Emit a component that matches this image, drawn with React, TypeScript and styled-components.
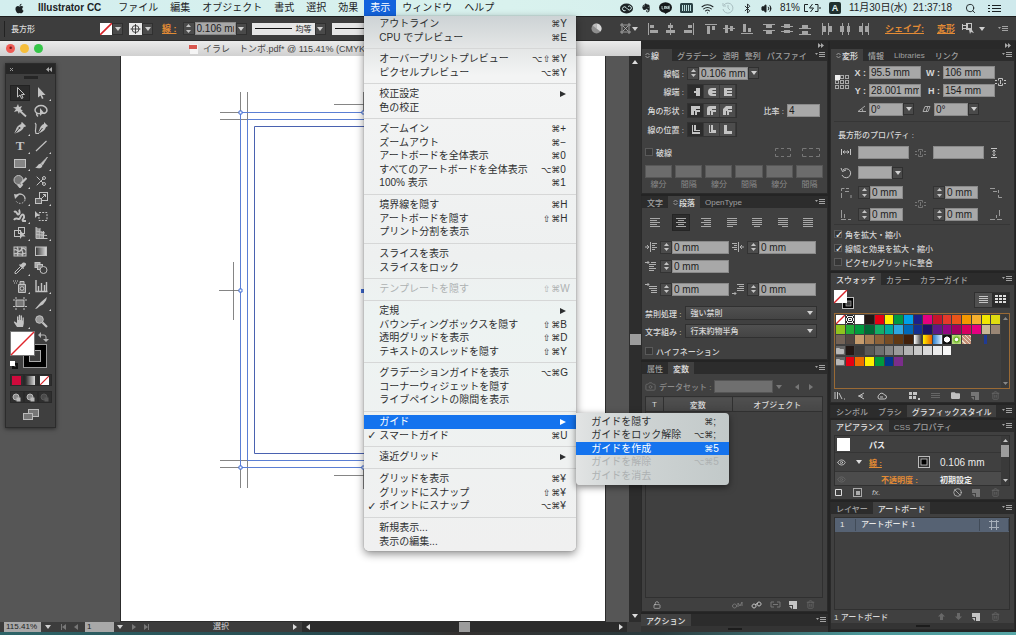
import React from 'react';
import styled, { createGlobalStyle, css } from 'styled-components';
import { Scissors, Wifi, Bluetooth, Volume2, Search, Trash2, Camera, Eye, LockOpen, Ban } from 'lucide-react';
import { FaApple, FaEvernote, FaLine, FaFolder } from 'react-icons/fa';

const ui = '"Liberation Sans", "Noto Sans CJK JP", "DejaVu Sans", sans-serif';

const GlobalStyle = createGlobalStyle`
  * { box-sizing: border-box; }
  body { margin: 0; background: #2a2a2a; font-family: ${ui}; font-size: 8px; color: #d6d6d6; }
  button, input, select { font: inherit; color: inherit; margin: 0; padding: 0; border: 0; border-radius: 0; background: none; }
  button { display: inline-flex; align-items: center; justify-content: center; }
  svg { display: block; flex: none; }
`;

/* ---------- shell ---------- */

const Page = styled.div`
  min-height: 100vh;
  display: flex;
  flex-direction: column;
  overflow: hidden;
`;

const Workspace = styled.main`
  flex: 1;
  display: flex;
`;

const Desktop = styled.div`
  height: 3px;
  background: linear-gradient(90deg, #2d6468, #27484d 35%, #33302f 45%, #2b3c3f 65%, #4b9799 85%, #57a6a6);
`;

/* ---------- menu bar ---------- */

const MenuBar = styled.nav`
  height: 16px;
  display: flex;
  align-items: center;
  padding: 0 15px 0 14px;
  background: linear-gradient(90deg, #d3eeee, #d9f2ee 50%, #cfe9ec);
  color: #1c2224;
  font-size: 10px;
  line-height: 16px;
  white-space: nowrap;
  position: relative;
  z-index: 5;
`;

const MenuTitle = styled.button<{ $open?: boolean; $bold?: boolean }>`
  height: 16px;
  padding: 0 6px;
  font-weight: ${p => (p.$bold ? 700 : 400)};
  ${p => p.$open && css`background: #1263dd; color: #fff;`}
`;

const MenuAnchor = styled.div`
  position: relative;
`;

const StatusItems = styled.div`
  margin-left: auto;
  display: flex;
  align-items: center;
  gap: 8px;
`;

const InputMode = styled.span`
  width: 12px;
  height: 12px;
  border-radius: 2px;
  background: #20302f;
  color: #e4f5f3;
  font-size: 9px;
  line-height: 12px;
  text-align: center;
  font-weight: 700;
`;

const Clock = styled.span`
  display: flex;
  gap: 6px;
  margin-right: 5px;
`;

const DropMenu = styled.ul`
  position: absolute;
  top: 16px;
  left: 0;
  width: 212px;
  margin: 0;
  padding: 1px 0 3px;
  list-style: none;
  background: linear-gradient(180deg, #cdd3d5, #e4e6e6 32px, #f3f4f4 60px, #eef0f0 240px, #edf3f2 300px, #f0f0f0);
  border-radius: 0 0 5px 5px;
  box-shadow: 0 3px 8px rgba(0, 0, 0, 0.45), 0 0 1px rgba(0, 0, 0, 0.5);
  color: #2d2f30;
`;

const MenuGroup = styled.ul`
  margin: 0;
  padding: 0;
  list-style: none;
  & > li:nth-child(odd) { height: 14px; }
  & > li:nth-child(even) { height: 13px; }
`;

const MenuRule = styled.li`
  height: 8px;
  display: flex;
  align-items: center;
  &::before { content: ''; flex: 1; height: 1px; background: #d6d7d7; }
`;

const MenuRow = styled.li<{ $tone?: 'active' | 'dim' }>`
  position: relative;
  display: flex;
  align-items: center;
  padding-right: 9px;
  line-height: 14px;
  ${p => p.$tone === 'active' && css`background: #1473ee; color: #fff;`}
  ${p => p.$tone === 'dim' && css`color: #adb1b2;`}
`;

const Check = styled.span`
  width: 15px;
  padding-left: 3px;
  font: 700 11px/13px "DejaVu Sans", sans-serif;
`;

const Keys = styled.span`
  margin-left: auto;
  display: flex;
  align-items: center;
  font-family: "DejaVu Sans", sans-serif;
  font-size: 9px;
`;

const KeyMod = styled.span<{ $wide?: boolean }>`
  display: grid;
  place-items: center;
  width: ${p => (p.$wide ? 11 : 9)}px;
`;

const KeyName = styled.span`
  width: 7px;
  font-family: ${ui};
  font-size: 10px;
`;

const SubMenu = styled.ul`
  position: absolute;
  left: 100%;
  top: -2px;
  width: 153px;
  height: 72px;
  margin: 0;
  padding: 2px 0;
  list-style: none;
  border-radius: 0 4px 4px 4px;
  background: linear-gradient(90deg, #e2e4e4, #d0d5d5 30%, #c2c9c9);
  box-shadow: 0 2px 7px rgba(0, 0, 0, 0.5);
  color: #2d2f30;
  & > li:nth-child(odd) { height: 13px; }
  & > li:nth-child(even) { height: 14px; }
`;

type Entry = { t: string; mods?: string; k?: string; sub?: boolean; on?: boolean; dim?: boolean; active?: boolean; items?: Entry[] };

const viewMenu: Entry[][] = [
  [{ t: 'アウトライン', mods: '⌘', k: 'Y' }, { t: 'CPU でプレビュー', mods: '⌘', k: 'E' }],
  [{ t: 'オーバープリントプレビュー', mods: '⌥⇧⌘', k: 'Y' }, { t: 'ピクセルプレビュー', mods: '⌥⌘', k: 'Y' }],
  [{ t: '校正設定', sub: true }, { t: '色の校正' }],
  [
    { t: 'ズームイン', mods: '⌘', k: '+' },
    { t: 'ズームアウト', mods: '⌘', k: '−' },
    { t: 'アートボードを全体表示', mods: '⌘', k: '0' },
    { t: 'すべてのアートボードを全体表示', mods: '⌥⌘', k: '0' },
    { t: '100% 表示', mods: '⌘', k: '1' },
  ],
  [{ t: '境界線を隠す', mods: '⌘', k: 'H' }, { t: 'アートボードを隠す', mods: '⇧⌘', k: 'H' }, { t: 'プリント分割を表示' }],
  [{ t: 'スライスを表示' }, { t: 'スライスをロック' }],
  [{ t: 'テンプレートを隠す', mods: '⇧⌘', k: 'W', dim: true }],
  [
    { t: '定規', sub: true },
    { t: 'バウンディングボックスを隠す', mods: '⇧⌘', k: 'B' },
    { t: '透明グリッドを表示', mods: '⇧⌘', k: 'D' },
    { t: 'テキストのスレッドを隠す', mods: '⇧⌘', k: 'Y' },
  ],
  [{ t: 'グラデーションガイドを表示', mods: '⌥⌘', k: 'G' }, { t: 'コーナーウィジェットを隠す' }, { t: 'ライブペイントの隙間を表示' }],
  [
    {
      t: 'ガイド', sub: true, active: true,
      items: [
        { t: 'ガイドを隠す', mods: '⌘', k: ';' },
        { t: 'ガイドをロック解除', mods: '⌥⌘', k: ';' },
        { t: 'ガイドを作成', mods: '⌘', k: '5', active: true },
        { t: 'ガイドを解除', mods: '⌥⌘', k: '5', dim: true },
        { t: 'ガイドを消去', dim: true },
      ],
    },
    { t: 'スマートガイド', mods: '⌘', k: 'U', on: true },
  ],
  [{ t: '遠近グリッド', sub: true }],
  [{ t: 'グリッドを表示', mods: '⌘', k: '¥' }, { t: 'グリッドにスナップ', mods: '⇧⌘', k: '¥' }, { t: 'ポイントにスナップ', mods: '⌥⌘', k: '¥', on: true }],
  [{ t: '新規表示...' }, { t: '表示の編集...' }],
];

const MenuLine = ({ e }: { e: Entry }) => (
  <MenuRow $tone={e.active ? 'active' : e.dim ? 'dim' : undefined}>
    <Check>{e.on ? '✓' : ''}</Check>
    {e.t}
    <Keys>
      {[...(e.mods ?? '')].map(m => <KeyMod key={m} $wide={m === '⌥'}>{m}</KeyMod>)}
      {e.k && <KeyName>{e.k}</KeyName>}
      {e.sub && <svg width="7" height="8" viewBox="0 0 7 8"><path d="M0 1l6 3-6 3z" fill="currentColor" /></svg>}
    </Keys>
    {e.items && <SubMenu>{e.items.map(s => <MenuLine key={s.t} e={s} />)}</SubMenu>}
  </MenuRow>
);

/* ---------- shared controls ---------- */

const Ico = ({ w = 12, h = w, d, line, o = 1, c = '#c4c4c4' }: { w?: number; h?: number; d: string; line?: boolean; o?: number; c?: string }) => (
  <svg width={w} height={h} viewBox={`0 0 ${w} ${h}`} opacity={o} aria-hidden="true">
    <path d={d} fill={line ? 'none' : c} stroke={line ? c : 'none'} />
  </svg>
);

const Caret = ({ c = '#d0d0d0' }: { c?: string }) => <Ico w={6} h={4} d="M0 0h6L3 4z" c={c} />;

const CaretButton = styled.button`
  width: 11px;
  height: 12px;
  background: #4a4a4a;
  border: 1px solid #303030;
`;

const SpinBox = styled.span`
  width: 12px;
  height: 13px;
  display: flex;
  flex-direction: column;
  background: #4b4b4b;
  border: 1px solid #333;
  & > button { flex: 1; }
`;

const Spinner = ({ label }: { label: string }) => (
  <SpinBox>
    <button aria-label={`${label} +`}><Ico w={5} h={3} d="M0 3h5L2.5 0z" /></button>
    <button aria-label={`${label} -`}><Ico w={5} h={3} d="M0 0h5L2.5 3z" /></button>
  </SpinBox>
);

const Field = styled.input<{ $w?: number; $off?: boolean }>`
  width: ${p => (p.$w ? `${p.$w}px` : 'auto')};
  ${p => !p.$w && 'flex: 1; min-width: 0;'}
  height: 13px;
  padding: 0 1px;
  background: ${p => (p.$off ? '#6f6f6f' : '#a8a8a8')};
  border: 1px solid ${p => (p.$off ? '#555' : '#8a8a8a')};
  color: #1d1d1d;
  font-size: 10px;
  line-height: 11px;
`;

const Row = styled.div<{ $h: number; $gap?: number }>`
  height: ${p => p.$h}px;
  display: flex;
  align-items: center;
  gap: ${p => p.$gap ?? 3}px;
`;

const Push = styled.span`
  flex: 1;
`;

const Label = styled.label<{ $w?: number; $dim?: boolean }>`
  ${p => p.$w && `width: ${p.$w}px;`}
  text-align: right;
  white-space: nowrap;
  font-weight: 500;
  color: ${p => (p.$dim ? '#8b8b8b' : '#d8d8d8')};
`;

const Tick = styled.label`
  display: flex;
  align-items: center;
  gap: 3px;
  font-weight: 500;
  & > input {
    appearance: none;
    width: 8px;
    height: 8px;
    background: #363636;
    border: 1px solid #5a5a5a;
    display: grid;
    place-items: center;
  }
  & > input:checked::after {
    content: '✓';
    font: 700 10px/8px "DejaVu Sans", sans-serif;
    color: #f0f0f0;
  }
`;

/* ---------- control bar ---------- */

const ControlBar = styled.header`
  height: 25px;
  display: flex;
  align-items: center;
  padding: 0 8px 0 4px;
  background: #3d3d3d;
  border-top: 1px solid #1e1e1e;
  border-bottom: 1px solid #2b2b2b;
  white-space: nowrap;
`;

const BarSet = styled.div<{ $ml?: number; $gap?: number }>`
  display: flex;
  align-items: center;
  gap: ${p => p.$gap ?? 0}px;
  margin-left: ${p => p.$ml ?? 0}px;
`;

const BarLink = styled.a<{ $ml?: number }>`
  margin-left: ${p => p.$ml ?? 0}px;
  color: #e28b35;
  font-size: 9px;
  font-weight: 700;
  text-decoration: underline;
`;

const Grip = styled.span`
  width: 1px;
  height: 16px;
  background: #222;
`;

const Profile = styled.span`
  width: 63px;
  height: 12px;
  display: flex;
  align-items: center;
  gap: 4px;
  padding: 0 3px;
  background: #e6e6e6;
  color: #222;
  &::before { content: ''; flex: 1; height: 1px; background: #111; }
`;

const NoneSwatch = ({ s = 12 }: { s?: number }) => (
  <svg width={s} height={s} viewBox="0 0 12 12" aria-hidden="true">
    <rect width="12" height="12" fill="#fff" />
    <path d="M0 12L12 0" stroke="#d8242a" strokeWidth="1.6" />
  </svg>
);

const alignSets = [
  ['M1 0h1v12H1zM3 2h4v3H3zM3 7h8v3H3z', 'M5 0h1v12H5zM3 2h5v3H3zM1 7h9v3H1z', 'M10 0h1v12h-1zM5 2h4v3H5zM1 7h8v3H1z'],
  ['M0 1h12v1H0zM2 3h3v8H2zM7 3h3v4H7z', 'M0 5h12v1H0zM2 2h3v8H2zM7 3h3v5H7z', 'M0 10h12v1H0zM2 1h3v8H2zM7 5h3v4H7z'],
  ['M0 1h12v1H0zM3 2h6v3H3zM0 7h12v1H0zM3 8h6v3H3z', 'M0 3h12v1H0zM3 1h6v4H3zM0 8h12v1H0zM3 7h6v3H3z', 'M0 5h12v1H0zM3 2h6v3H3zM0 11h12v1H0zM3 8h6v3H3z'],
  ['M1 0h1v12H1zM2 3h3v6H2zM7 0h1v12H7zM8 3h3v6H8z', 'M3 0h1v12H3zM1 3h4v6H1zM9 0h1v12H9zM8 3h3v6H8z', 'M5 0h1v12H5zM2 3h3v6H2zM11 0h1v12h-1zM8 3h3v6H8z'],
];

const TopBar = () => (
  <ControlBar>
    <Grip />
    <BarSet $ml={6}><Label>長方形</Label></BarSet>
    <BarSet $ml={65}><NoneSwatch /><CaretButton aria-label="塗り"><Caret /></CaretButton></BarSet>
    <BarSet $ml={6}>
      <svg width="13" height="12" viewBox="0 0 13 12"><rect width="13" height="12" fill="#e8e8e8" /><g fill="none" stroke="#222"><circle cx="6.5" cy="6" r="3.5" strokeWidth=".8" /><path d="M6.500 1v10M1.500 6h10" strokeWidth=".8" /></g></svg>
      <CaretButton aria-label="線の色"><Caret /></CaretButton>
    </BarSet>
    <BarSet $ml={9} $gap={6}>
      <BarLink href="#stroke">線 :</BarLink>
      <BarSet><Spinner label="線幅" /><Field $w={41} aria-label="線幅" defaultValue="0.106 mm" /><CaretButton aria-label="線幅の候補"><Caret /></CaretButton></BarSet>
    </BarSet>
    <BarSet $ml={5}><Profile>均等</Profile><CaretButton aria-label="可変線幅"><Caret /></CaretButton></BarSet>
    <BarSet $ml={6}><Profile /><CaretButton aria-label="ブラシ定義"><Caret /></CaretButton></BarSet>
    <Push />
    <svg width="11" height="11" viewBox="0 0 11 11"><circle cx="5.500" cy="5.500" r="5" fill="#8e8e8e" /><path d="M5.500.5a5 5 0 0 1 4 8L5.500 5.500z" fill="#d8d8d8" /><path d="M1.500 2.500a5 5 0 0 1 4-2v5z" fill="#bbb" /></svg>
    <BarSet $ml={18} $gap={1}>
      <svg width="11" height="11" viewBox="0 0 11 11"><path d="M2 0v11M9 0v11M0 2h11M0 9h11M3 3l5 5M8 3l-5 5" stroke="#b5b5b5" strokeWidth=".8" /></svg>
      <Caret />
    </BarSet>
    {alignSets.map((set, i) => (
      <BarSet key={i} $ml={i ? 10 : 9} $gap={6}>
        {set.map(d => <button key={d} aria-label="整列"><Ico d={d} c="#a4a4a4" /></button>)}
      </BarSet>
    ))}
    <BarLink $ml={16} href="#shape">シェイプ:</BarLink>
    <BarLink $ml={13} href="#transform">変形</BarLink>
    <BarSet $ml={7} $gap={5}>
      <Ico w={12} h={11} d="M0 1h1v6H0zM1 2h3v1H1zM1 5h3v1H1zM4 0h6v7l2 3-3-1-1 2-1-4H4zM6 1v4h3V1z" />
      <Caret />
    </BarSet>
    <BarSet $ml={13}><PanelMenu /></BarSet>
  </ControlBar>
);

function PanelMenu() {
  return <button aria-label="パネルメニュー"><Ico w={10} h={8} d="M0 2h3L1.500 4zM4 1h6v1H4zM4 3h6v1H4zM4 5h6v1H4z" c="#a2a2a2" /></button>;
}

/* ---------- document window ---------- */

const DocWindow = styled.section`
  flex: 1;
  min-width: 0;
  display: flex;
  flex-direction: column;
`;

const TitleBar = styled.div`
  height: 15px;
  display: flex;
  align-items: center;
  padding-left: 6px;
  background: linear-gradient(180deg, #ebebeb, #d0d0d0);
  color: #444;
`;

const Light = styled.button<{ $c: string }>`
  width: 9px;
  height: 9px;
  margin-right: 5px;
  border-radius: 50%;
  background: ${p => p.$c};
  font-size: 9px;
  line-height: 9px;
  color: #7a1511;
`;

const DocName = styled.h1`
  margin: 0 0 0 141px;
  display: flex;
  align-items: center;
  gap: 5px;
  font-size: 9px;
  font-weight: 400;
  white-space: pre;
`;

const Stage = styled.div`
  flex: 1;
  display: flex;
  background: #565656;
`;

const Canvas = styled.div`
  flex: 1;
  position: relative;
  overflow: hidden;
`;

const Artboard = styled.div`
  position: absolute;
  top: 0;
  bottom: 0;
  left: 120px;
  width: 486px;
  background: #fff;
  border: solid #2c2c2c;
  border-width: 0 1px 1px;
`;

const VScroll = styled.div`
  width: 12px;
  display: flex;
  flex-direction: column;
  align-items: center;
  justify-content: space-between;
  padding: 4px 0;
  background: #2d2d2d;
`;

const Thumb = styled.span<{ $w: number; $h: number }>`
  width: ${p => p.$w}px;
  height: ${p => p.$h}px;
  background: #9c9c9c;
`;

const StatusBar = styled.footer`
  height: 10px;
  display: flex;
  align-items: center;
  background: #3c3c3c;
  line-height: 10px;
`;

const StatusField = styled.input<{ $w: number }>`
  width: ${p => p.$w}px;
  height: 10px;
  padding: 0 2px;
  background: #a8a8a8;
  color: #1d1d1d;
`;

const StatusText = styled.span`
  width: 144px;
  text-align: center;
`;

const HTrack = styled.span`
  flex: 1;
  height: 10px;
  display: flex;
  align-items: center;
  justify-content: space-between;
  padding: 0 4px;
  background: #2b2b2b;
`;

const Artwork = () => (
  <svg width="245" height="440" viewBox="121 56 245 440" aria-label="トンボ">
    <g fill="none" stroke="#666" strokeWidth=".8">
      <path d="M240.500 92v21M247.500 92v28M220 112.500h20M220 119.500h28M240.500 488v-20M247.500 488v-28M220 467.500h20M220 460.500h28M233.500 262v58M219 290.500h22M334 104.500h31M334 475.500h31M363.500 92v20M363.500 468v21" />
    </g>
    <g fill="none" stroke="#5b7fd4">
      <path d="M366 112.500H240.500v355H366M366 119.500H247.500v341H366" />
      <path d="M366 126.500H254.500v327H366" stroke="#4a62b0" />
    </g>
    <g fill="#fff" stroke="#4a74d8">
      <path d="M239 111h3v3h-3zM239 289h3v3h-3zM239 466h3v3h-3zM362 111h3v3h-3zM362 466h3v3h-3z" />
    </g>
    <path d="M361 289h4v4h-4z" fill="#3c68d0" />
  </svg>
);

/* ---------- tool palette ---------- */

const Palette = styled.aside`
  position: absolute;
  left: 5px;
  top: 7px;
  width: 51px;
  background: #3f3f3f;
  border: 1px solid #2c2c2c;
  box-shadow: 0 1px 4px rgba(0, 0, 0, 0.5);
  padding-bottom: 6px;
`;

const PaletteHead = styled.div`
  height: 10px;
  display: flex;
  align-items: center;
  justify-content: space-between;
  padding: 0 3px;
  background: #272727;
`;

const PaletteGrip = styled.div`
  width: 14px;
  height: 3px;
  margin: 2px auto 6px;
  background: #262626;
`;

const Tools = styled.div`
  height: 245px;
  display: grid;
  grid-template-columns: 21px 21px;
  grid-template-rows: repeat(14, 1fr);
  padding-left: 4px;
`;

const Tool = styled.button<{ $on?: boolean; $more?: boolean }>`
  position: relative;
  height: 16px;
  width: 20px;
  color: #c2c2c2;
  ${p => p.$on && css`background: #2b2b2b; box-shadow: inset 0 0 0 1px #222;`}
  ${p => p.$more && css`
    &::after { content: ''; position: absolute; right: 0; bottom: 0; border: 1px solid #cfcfcf; border-left-color: transparent; border-top-color: transparent; }
  `}
`;

const Serif = styled.span`
  font: 700 13px/14px "Liberation Serif", serif;
`;

const art = (node: React.ReactNode) => (
  <svg width="14" height="14" viewBox="0 0 14 14" fill="none" stroke="#c2c2c2" strokeWidth="1" aria-hidden="true">{node}</svg>
);
const F = '#c2c2c2';

const toolset: { name: string; icon: React.ReactNode; more?: boolean; on?: boolean }[] = [
  { name: '選択', on: true, icon: art(<path d="M4.500 1.500v9.500l2.500-2 1.500 3.500 1.500-.7-1.500-3.300h3z" />) },
  { name: 'ダイレクト選択', more: true, icon: art(<path d="M4 1v10.500l2.500-2 1.500 3.500 1.500-.7L8 9h3.500z" fill={F} stroke="none" />) },
  { name: '自動選択', icon: art(<><path d="M6 6l7 6.500" strokeWidth="1.800" /><path d="M5 0l1 3 3-1-1.500 3L10 7 7 7l-1 3-1.500-3L1 8l2-3L0 3.500l3.500-.5z" fill={F} stroke="none" /></>) },
  { name: 'なげなわ', icon: art(<><path d="M6 9.500C3 10 1 8 1 6c0-2.500 3-4.500 6-4.500S13 3.500 13 6c0 2-1.500 3-3 3.500M3 9c-1 1 0 2.500 1 3.500" strokeWidth="1.400" /><path d="M6 4v8l2-2h3z" fill={F} stroke="none" /></>) },
  { name: 'ペン', more: true, icon: art(<><path d="M9 1l4 4-1 1-1-.3C10 9 7 11 2 12.500L1.500 12 3.500 7C4.500 5 6.500 3.500 8.500 3L8 2z" fill={F} stroke="none" /><path d="M2 12.500l4-5" stroke="#3f3f3f" /><circle cx="6.500" cy="7" r="1" fill="#3f3f3f" stroke="none" /></>) },
  { name: '曲線', icon: art(<><path d="M10 1l4 4-2 1c-1 3-3 5-8 6.500L6 7c1-2 2-3.500 4-4z" fill={F} stroke="none" /><path d="M4.500 12l4-5" stroke="#3f3f3f" /><path d="M1 2c3 2-1 5 1 10.500h3" strokeWidth="1.200" /></>) },
  { name: '文字', more: true, icon: <Serif>T</Serif> },
  { name: '直線', more: true, icon: art(<path d="M2 12L12.500 2" strokeWidth="1.200" />) },
  { name: '長方形', more: true, icon: art(<rect x="1.500" y="3.500" width="11" height="8" fill="#858585" />) },
  { name: 'ブラシ', more: true, icon: art(<><path d="M13.500 1L7 7.500l1.500 1.500z" fill={F} strokeWidth=".8" /><path d="M7 8c-3-1-3 3-6 3.500 3 1.500 7 1 7.500-2z" fill={F} stroke="none" /></>) },
  { name: '塗りブラシ', more: true, icon: art(<><circle cx="5.500" cy="6" r="4.500" fill="#777" /><path d="M13.500 4L8 9.500M5 10.500l2 2.500 2.500-3" strokeWidth="2.200" /></>) },
  { name: 'はさみ', more: true, icon: <Scissors size={12} style={{ rotate: '180deg' }} /> },
  { name: '回転', more: true, icon: art(<><path d="M3.500 4.500a5 5 0 0 1 8.500 4" strokeWidth="1.300" /><path d="M12 9a5 5 0 0 1-9 1" strokeDasharray="1.500 1.500" /><path d="M1 3l1 5 4-4z" fill={F} stroke="none" /></>) },
  { name: '拡大・縮小', more: true, icon: art(<><rect x="5.500" y="1.500" width="8" height="8" /><rect x="1.500" y="7.500" width="6" height="5" fill="#666" /><path d="M8 7l3.500-3.500M9 3.500h2.500V6" /></>) },
  { name: '線幅', more: true, icon: art(<path d="M1 3c3-2 3 4 5 2s-1-3 1-4M1 11c2-4 5 1 6-2s3-5 4-2-3 3-1 5h3" strokeWidth="2" />) },
  { name: '自由変形', icon: art(<><path d="M1 2v7l2-2h3z" fill={F} stroke="none" /><rect x="5" y="3.500" width="8" height="8" strokeDasharray="2 1.200" /></>) },
  { name: 'シェイプ形成', more: true, icon: art(<><rect x="1.500" y="4.500" width="6" height="6" /><rect x="5.500" y="1.500" width="6" height="6" /><path d="M7 4v9l2-2.500h3.500z" fill={F} stroke="none" /></>) },
  { name: '遠近グリッド', more: true, icon: art(<><path d="M2 1l4 2v9H2zM7 5l3 1v6H7z" fill="#999" stroke="none" /><path d="M2 1v11.500h11.500M2 5l9 2M2 8.500l11 1M6 2v10M9.500 5v7" /></>) },
  { name: 'メッシュ', icon: art(<><rect x="1" y="3" width="12" height="9" fill="#555" /><path d="M1 6c3-2 4 4 7 0s4 0 5 0M1 10c3-2 6 2 12-1M4 3c3 4-1 6 1 9M9 3c-2 4 3 5 0 9" strokeWidth="1.300" /></>) },
  { name: 'グラデーション', icon: <svg width="14" height="14" viewBox="0 0 14 14"><defs><linearGradient id="gr"><stop stopColor="#333" /><stop offset="1" stopColor="#ddd" /></linearGradient></defs><rect x="1.500" y="3" width="11" height="8.500" fill="url(#gr)" stroke="#c2c2c2" /></svg> },
  { name: 'スポイト', more: true, icon: art(<><path d="M9 2.500c1-2 5-1 4 1.500L10.500 6.500l.5 1-1 .5-4-4 .8-.8 1 .4z" fill={F} stroke="none" /><path d="M7.500 5.500L2 11v1.500h1.500L9 7" /></>) },
  { name: 'ブレンド', icon: art(<><rect x="1" y="1.500" width="5" height="5" fill="#aaa" /><rect x="3.500" y="3.500" width="5" height="5" fill="#888" /><circle cx="9.500" cy="9" r="3.500" fill="#3f3f3f" /></>) },
  { name: 'シンボルスプレー', more: true, icon: art(<><path d="M5.500 5.500h7v8h-7zM7 5V2.500h4V5" fill="#777" /><circle cx="9" cy="9.500" r="1.800" fill="#444" /><path d="M0 2h5M1 4h3" strokeDasharray="1 1" /></>) },
  { name: '棒グラフ', more: true, icon: art(<path d="M2 1v11.500h11.500M4.500 12V7M7.500 12V4M10.500 12V6M12.500 12V3" strokeWidth="1.400" />) },
  { name: 'アートボード', icon: art(<><rect x="3" y="4" width="8" height="6.500" fill="#777" /><path d="M3 1v2M11 1v2M3 12v2M11 12v2M0 4h2M12 4h2M0 10.500h2M12 10.500h2" /></>) },
  { name: 'スライス', more: true, icon: art(<path d="M13 1L7 6 1 13l2-.5 3-2.500 1-.5 2-1 3-4z" fill={F} stroke="none" />) },
  { name: '手のひら', more: true, icon: art(<path d="M4 13L1 8.500c-.5-1 .7-1.500 1.500-.5L4 9V3c0-1 1.300-1 1.300 0v3h.5V1.500c0-1 1.400-1 1.400 0V6h.5V2c0-1 1.300-1 1.300 0v4.500h.5V4c0-1 1.300-1 1.300 0v5.500L10 13z" fill={F} stroke="none" />) },
  { name: 'ズーム', icon: art(<><circle cx="5.500" cy="5.500" r="3.800" fill="#999" /><path d="M8.500 8.500L13 13" strokeWidth="2.200" /></>) },
];

const PaletteStack = styled.div`
  display: flex;
  flex-direction: column;
  align-items: center;
  padding-top: 1px;
  & > svg:first-child { margin-bottom: 2px; }
`;

const Chips = styled.div`
  display: flex;
  height: 12px;
  margin-bottom: 5px;
  background: #2f2f2f;
  & > button { width: 14px; height: 12px; border: 1px solid #292929; }
`;

const FillStroke = () => (
  <svg width="41" height="41" viewBox="0 0 41 41" aria-label="塗りと線">
    <path d="M30 4h4a2 2 0 0 1 2 2v3" stroke="#b5b5b5" fill="none" />
    <path d="M31 1v6l-3-3zM33 8h6l-3 3z" fill="#b5b5b5" />
    <rect x="13" y="13" width="24" height="24" fill="#999" />
    <rect x="14" y="14" width="22" height="22" fill="#000" />
    <rect x="19" y="19" width="12" height="12" fill="#aaa" />
    <rect x="20" y="20" width="10" height="10" fill="#3f3f3f" />
    <rect x="0" y="0" width="25" height="25" fill="#777" />
    <rect x="1" y="1" width="23" height="23" fill="#fff" />
    <path d="M1 24L24 1" stroke="#e0262c" strokeWidth="1.500" />
    <rect x="3" y="33" width="4" height="4" fill="none" stroke="#111" strokeWidth="2" />
    <rect x="0" y="30" width="5" height="5" fill="#fff" />
  </svg>
);

/* ---------- dock ---------- */

const Dock = styled.aside`
  display: grid;
  grid-template-columns: 187px 185px;
  gap: 2px;
  padding-right: 1px;
  background: #242424;
`;

const Column = styled.div`
  display: flex;
  flex-direction: column;
`;

const DockHead = styled.div`
  height: 8px;
  display: flex;
  justify-content: flex-end;
  align-items: center;
  padding-right: 4px;
  background: #292929;
`;

const Panel = styled.section<{ $grow?: boolean }>`
  display: flex;
  flex-direction: column;
  margin-bottom: 2px;
  background: #404040;
  border: 1px solid #2a2a2a;
  border-top: 0;
  ${p => p.$grow && 'flex: 1;'}
`;

const Tabs = styled.div`
  height: 12px;
  display: flex;
  background: #2c2c2c;
  padding-right: 2px;
`;

const TabButton = styled.button<{ $on?: boolean; $tight?: boolean }>`
  height: 12px;
  padding: 0 ${p => (p.$tight ? 3 : 5)}px;
  ${p => p.$tight && p.$on && 'padding-right: 13px; margin-right: 2px;'}
  gap: 1px;
  white-space: nowrap;
  font-weight: 500;
  color: ${p => (p.$on ? '#e2e2e2' : '#a0a0a0')};
  background: ${p => (p.$on ? '#404040' : 'transparent')};
`;

const TabBar = ({ tabs, on, handle, tight }: { tabs: string[]; on: number; handle?: boolean; tight?: boolean }) => (
  <Tabs role="tablist">
    {tabs.map((t, i) => (
      <TabButton key={t} role="tab" aria-selected={i === on} $on={i === on} $tight={tight}>
        {handle && i === on && <Ico w={5} h={7} d="M.5 3L2.500 1l2 2M.5 4l2 2 2-2" line c="#999" />}
        {t}
      </TabButton>
    ))}
    <Push />
    <PanelMenu />
  </Tabs>
);

const Body = styled.div<{ $pt?: number; $pb?: number }>`
  display: flex;
  flex-direction: column;
  flex: 1;
  padding: ${p => p.$pt ?? 3}px 4px ${p => p.$pb ?? 3}px 3px;
`;

const Segment = styled.div`
  display: flex;
  border: 1px solid #323232;
  & > button { width: 16px; height: 13px; background: #4d4d4d; border-right: 1px solid #3a3a3a; }
  & > button:first-child { background: #2c2c2c; }
`;

const DashGrid = styled.div`
  display: grid;
  grid-template-columns: repeat(6, 1fr);
  gap: 0 3px;
  text-align: center;
  color: #8a8a8a;
  line-height: 14px;
  & > label { display: flex; flex-direction: column; }
  & input { width: 100%; height: 13px; background: #6c6c6c; border: 1px solid #575757; }
`;

const AlignButton = styled.button<{ $on?: boolean }>`
  width: 18px;
  height: 17px;
  ${p => p.$on && 'background: #2d2d2d; box-shadow: inset 0 0 0 1px #252525;'}
`;

const Spread = styled.div`
  height: 22px;
  display: flex;
  align-items: center;
  justify-content: space-between;
  padding: 0 6px 0 1px;
`;

const SelectBox = styled.span`
  flex: 1;
  display: grid;
  align-items: center;
  height: 14px;
  margin-right: 6px;
  background: linear-gradient(#505050, #444);
  border: 1px solid #303030;
  & > * { grid-area: 1 / 1; }
  & > select { appearance: none; width: 100%; height: 12px; padding-left: 4px; font-weight: 500; }
  & > svg { justify-self: end; margin-right: 3px; pointer-events: none; }
`;

const Chooser = ({ id, value }: { id: string; value: string }) => (
  <SelectBox><select id={id} defaultValue={value}><option>{value}</option></select><Caret /></SelectBox>
);

const VarTable = styled.table`
  width: 100%;
  border-collapse: collapse;
  & th { height: 15px; padding: 0; border: 1px solid #303030; background: linear-gradient(#505050, #464646); font-weight: 500; color: #d8d8d8; }
`;

const Well = styled.div<{ $plain?: boolean }>`
  flex: 1;
  border: 1px solid #303030;
  ${p => p.$plain && 'border-top: 0;'}
`;

const Footer = styled.div<{ $gap?: number }>`
  height: 13px;
  display: flex;
  align-items: center;
  gap: ${p => p.$gap ?? 8}px;
  color: #c0c0c0;
`;

const Dim = styled.span`
  display: inline-flex;
  color: #6a6a6a;
`;

const GripBar = styled.div`
  height: 6px;
  display: grid;
  place-items: center;
  background: #343434;
  &::before { content: ''; width: 14px; height: 2px; background: #1c1c1c; }
`;

const Divider = styled.hr`
  width: 100%;
  margin: 0;
  border: 0;
  height: 1px;
  background: #363636;
`;

const LinkMark = ({ o = 1 }: { o?: number }) => (
  <Ico w={12} h={12} o={o} line d="M3.500 4.500v-2h4v2M3.500 7.500v2h4v-2M5.500 4v4M0 4.500h2M9 4.500h2M0 7.500h2M9 7.500h2" />
);
const NewMark = ({ o = 1 }: { o?: number }) => <Ico w={9} h={8} o={o} d="M0 0h8v8H4V4H0zM0 5h3v3z" />;

const indent = {
  left: 'M0 6h4M2 4l2 2-2 2M5.500 1v10M7 2.500h5M7 4.500h3M7 6.500h5M7 8.500h3',
  right: 'M6.500 1v10M0 2.500h5M2 4.500h3M0 6.500h5M2 8.500h3M12 6H8M10 4L8 6l2 2',
  first: 'M0 2.500h4M2.500 1L4 2.500 2.500 4M6 2.500h5M4 4.500h7M4 6.500h5M4 8.500h7M4 10.500h5',
  before: 'M0 1.500h4M2.500 0L4 1.500 2.500 3M4 3.500h8M4 5.500h8M6 7.500h6M6 9.500h6',
  after: 'M0 10.500h4M2.500 9L4 10.500 2.500 12M5 1.500h7M7 3.500h5M5 5.500h7M5 7.500h7',
};

const StrokePanel = () => (
  <Panel>
    <TabBar tabs={['線', 'グラデーシ', '透明', '整列', 'パスファイ']} on={0} handle tight />
    <Body $pb={1}>
      <Row $h={18}>
        <Label $w={39} htmlFor="sw">線幅 :</Label>
        <BarSet><Spinner label="線幅" /><Field id="sw" $w={49} defaultValue="0.106 mm" /><CaretButton aria-label="候補"><Caret /></CaretButton></BarSet>
      </Row>
      <Row $h={19}>
        <Label as="span" $w={39}>線端 :</Label>
        <Segment>
          <button aria-label="バット"><Ico w={8} h={8} d="M4 0h4v2H4zM4 6h4v2H4zM2 3h6v2H2zM4 2h4v4H4z" /></button>
          <button aria-label="丸型"><Ico w={8} h={8} d="M8 0v2H5a2 2 0 0 0-1 1h4v2H4a2 2 0 0 0 1 1h3v2H4a4 4 0 0 1 0-8z" /></button>
          <button aria-label="突出"><Ico w={8} h={8} d="M0 0h8v2H3v1h5v2H3v1h5v2H0z" /></button>
        </Segment>
      </Row>
      <Row $h={19}>
        <Label as="span" $w={39}>角の形状 :</Label>
        <Segment>
          <button aria-label="マイター"><Ico w={9} h={9} d="M0 0h9v3H5v1h4v2H6v3H4V5H3v4H0z" /></button>
          <button aria-label="ラウンド"><Ico w={9} h={9} d="M3 0h6v3H5v1h4v2H6v3H4V5H3v4H0V3a3 3 0 0 1 3-3z" /></button>
          <button aria-label="ベベル"><Ico w={9} h={9} d="M3 0h6v3H5v1h4v2H6v3H4V5H3v4H0V3z" /></button>
        </Segment>
        <Push />
        <Label htmlFor="ratio">比率 :</Label>
        <Field id="ratio" $w={33} defaultValue="4" />
        <span />
      </Row>
      <Row $h={19}>
        <Label as="span" $w={39}>線の位置 :</Label>
        <Segment>
          <button aria-label="中央"><Ico w={9} h={9} d="M1 0h1v7h7v2H1zM4 0h1v5h4v1H3V0z" /></button>
          <button aria-label="内側"><Ico w={9} h={9} d="M2 0h1v7h6v1H2zM4 0h2v5h3v2H4z" /></button>
          <button aria-label="外側"><Ico w={9} h={9} d="M1 0h3v6h5v3H1z" /></button>
        </Segment>
      </Row>
      <Row $h={26}>
        <Tick><input type="checkbox" />破線</Tick>
        <Push />
        <Ico w={24} h={11} d="M3.500 4V1.500h3M9 1.500h3M15 1.500h3.500V4M3.500 7v2.500h3M9 9.500h3M15 9.500h3.500V7" line c="#777" />
        <Ico w={24} h={11} d="M3.500 4V1.500h4M10 1.500h4M17 1.500h3.500V4M3.500 7v2.500h4M10 9.500h4M17 9.500h3.500V7" line c="#777" />
      </Row>
      <DashGrid>
        {['線分', '間隔', '線分', '間隔', '線分', '間隔'].map((t, i) => <label key={i}><input disabled />{t}</label>)}
      </DashGrid>
    </Body>
  </Panel>
);

const para = [
  'M0 .5h10M0 2.500h7M0 4.500h10M0 6.500h7M0 8.500h10', 'M0 .5h10M2 2.500h6M0 4.500h10M2 6.500h6M0 8.500h10', 'M0 .5h10M3 2.500h7M0 4.500h10M3 6.500h7M0 8.500h10',
  'M0 .5h10M0 2.500h10M0 4.500h10M0 6.500h10M0 8.500h6', 'M0 .5h10M0 2.500h10M0 4.500h10M0 6.500h10M2 8.500h6', 'M0 .5h10M0 2.500h10M0 4.500h10M0 6.500h10M4 8.500h6', 'M0 .5h10M0 2.500h10M0 4.500h10M0 6.500h10M0 8.500h10',
];

const Measure = ({ icon, name }: { icon: string; name: string }) => (
  <BarSet $gap={3}>
    <Ico d={icon} line c="#b0b0b0" />
    <BarSet><Spinner label={name} /><Field $w={57} aria-label={name} defaultValue="0 mm" /></BarSet>
  </BarSet>
);

const ParagraphPanel = () => (
  <Panel>
    <TabBar tabs={['文字', '段落', 'OpenType']} on={1} handle />
    <Body $pt={3} $pb={0}>
      <Spread>
        {para.map((d, i) => <AlignButton key={d} $on={i === 1} aria-label="行揃え"><Ico w={10} h={9} d={d} line c="#a8a8a8" /></AlignButton>)}
      </Spread>
      <Row $h={28}><Measure icon={indent.left} name="左インデント" /><Measure icon={indent.right} name="右インデント" /></Row>
      <Row $h={10}><Measure icon={indent.first} name="1行目" /></Row>
      <Row $h={36}><Measure icon={indent.before} name="段落前" /><Measure icon={indent.after} name="段落後" /></Row>
      <Row $h={12} $gap={4}><Label htmlFor="kin">禁則処理 :</Label><Chooser id="kin" value="強い禁則" /></Row>
      <Row $h={24} $gap={4}><Label htmlFor="moji">文字組み :</Label><Chooser id="moji" value="行末約物半角" /></Row>
      <Row $h={16}><Tick><input type="checkbox" />ハイフネーション</Tick></Row>
    </Body>
  </Panel>
);

const VariablesPanel = () => (
  <Panel $grow>
    <TabBar tabs={['属性', '変数']} on={1} />
    <Body $pt={3} $pb={0}>
      <Row $h={19}>
        <Dim><Camera size={11} /></Dim>
        <Label $dim htmlFor="ds">データセット :</Label>
        <Field id="ds" $off disabled />
        <Caret c="#777" />
        <Row $h={19} $gap={10}><span /><Ico w={4} h={6} d="M4 0v6L0 3z" c="#777" /><Ico w={4} h={6} d="M0 0v6l4-3z" c="#777" /><span /></Row>
      </Row>
      <VarTable>
        <colgroup><col style={{ width: '10%' }} /><col style={{ width: '39%' }} /><col /></colgroup>
        <thead><tr><th>T</th><th>変数</th><th>オブジェクト</th></tr></thead>
      </VarTable>
      <Well $plain />
      <Footer>
        <span />
        <LockOpen size={8} />
        <Push />
        <Dim><Ico w={11} h={8} d="M2.500 3a2 2 0 1 0 .1 0M6 6V2l2 3 2-4v4" line c="#777" /></Dim>
        <Ico w={11} h={8} d="M3 3a2 2 0 1 0 .1 0M8 1a2 2 0 1 0 .1 0M4 4l3-2" line />
        <Ico w={11} h={8} d="M4 1H1v5h3M7 1h3v5H7M3 3.500h5" line c="#777" />
        <NewMark />
        <Dim><Trash2 size={9} /></Dim>
        <span />
      </Footer>
    </Body>
  </Panel>
);

const AnglePair = ({ name, path }: { name: string; path: string }) => (
  <BarSet $gap={3}>
    <Ico w={9} h={8} d={path} line c="#aaa" />
    <BarSet><Field $w={34} aria-label={name} defaultValue="0°" /><CaretButton aria-label={name}><Caret /></CaretButton></BarSet>
  </BarSet>
);

const TransformRow = styled.div`
  display: grid;
  grid-template-columns: 17px 1fr 17px;
  align-items: center;
`;

const Pairs = styled.div`
  display: grid;
  grid-template-columns: 15px 52px 16px 52px;
  align-items: center;
  justify-content: start;
  gap: 5px 3px;
  & > label { text-align: right; font-size: 9px; font-weight: 700; white-space: nowrap; }
`;

const Props = styled.div`
  display: grid;
  grid-template-columns: 12px 51px 12px 51px 12px;
  gap: 0 6px;
  align-items: center;
  padding-left: 6px;
`;

const CornerField = ({ n }: { n: string }) => (
  <BarSet><Spinner label={n} /><Field $w={33} aria-label={n} defaultValue="0 mm" /></BarSet>
);

const corners = ['M1.500 11V6M1.500 4V1.500h3M6 1.500h3M5 4.500h4M11 8v3', 'M1.500 1v8M4.500 5v4M1 10.500h5M8 10.500h3', 'M0 1.500h5M3 4.500h4M8.500 3v3M8.500 8v2.500H12', 'M9.500 1v6M6.500 6v3M0 10.500h5M7 10.500h5'];

const TransformPanel = () => (
  <Panel>
    <TabBar tabs={['変形', '情報', 'Libraries', 'リンク']} on={0} handle />
    <Body $pt={5} $pb={1}>
      <TransformRow>
        <svg width="16" height="16" viewBox="0 0 16 16"><g fill="none" stroke="#a8a8a8">{[2, 7, 12].map(x => [2, 7, 12].map(y => <rect key={`${x}${y}`} x={x - 0.5} y={y - 0.5} width="3" height="3" />))}</g><rect x="1" y="1" width="5" height="5" fill="#eee" /></svg>
        <Pairs>
          <label htmlFor="x">X :</label><Field id="x" $w={52} defaultValue="95.5 mm" />
          <label htmlFor="w">W :</label><Field id="w" $w={52} defaultValue="106 mm" />
          <label htmlFor="y">Y :</label><Field id="y" $w={52} defaultValue="28.001 mm" />
          <label htmlFor="h">H :</label><Field id="h" $w={52} defaultValue="154 mm" />
        </Pairs>
        <LinkMark />
      </TransformRow>
      <Row $h={24} $gap={8}><BarSet $ml={23}><AnglePair name="回転" path="M8 1L1 6.500h8M5 4l1 2.500" /></BarSet><AnglePair name="シアー" path="M3 1.500h5L6 6.500H1zM6 1L4 7" /></Row>
      <Divider />
      <Row $h={24}><Label as="span" $w={80}>長方形のプロパティ :</Label></Row>
      <Props>
        <Ico w={12} h={9} d="M1.500 1v6M10.500 1v6M3 4h6M4.500 2.500L3 4l1.500 1.500M7.500 2.500L9 4 7.500 5.500" line />
        <Field $w={51} aria-label="幅" /><LinkMark o={0.4} /><Field $w={51} aria-label="高さ" />
        <Ico w={9} h={12} d="M1 1.500h6M1 10.500h6M4 3v6M2.500 4.500L4 3l1.500 1.500M2.500 7.500L4 9l1.500-1.500" line />
      </Props>
      <Row $h={27} $gap={6}>
        <BarSet $ml={6}><Ico w={12} h={12} d="M3 3a4.500 4.500 0 1 1-1 5M1 1l1.500 3.500L6 3" line /></BarSet>
        <BarSet><Field $w={34} aria-label="角度" /><CaretButton aria-label="角度の候補"><Caret /></CaretButton></BarSet>
      </Row>
      <Props>
        <Ico d={corners[0]} line c="#999" /><CornerField n="左上" /><span /><CornerField n="右上" /><Ico d={corners[2]} line c="#999" />
      </Props>
      <Row $h={9}><BarSet $ml={81}><LinkMark o={0.4} /></BarSet></Row>
      <Props>
        <Ico d={corners[1]} line c="#999" /><CornerField n="左下" /><span /><CornerField n="右下" /><Ico d={corners[3]} line c="#999" />
      </Props>
      <Row $h={6}><Divider /></Row>
      <Row $h={14}><Tick><input type="checkbox" defaultChecked />角を拡大・縮小</Tick></Row>
      <Row $h={14}><Tick><input type="checkbox" defaultChecked />線幅と効果を拡大・縮小</Tick></Row>
      <Row $h={14}><Tick><input type="checkbox" />ピクセルグリッドに整合</Tick></Row>
    </Body>
  </Panel>
);

/* ---------- swatches ---------- */

const SwatchBox = styled.div`
  height: 76px;
  display: flex;
  border: 1px solid #9a6a35;
`;

const SwatchList = styled.div`
  flex: 1;
  display: flex;
  flex-direction: column;
  gap: 1px;
  padding: 1px;
`;

const SwatchRow = styled.div<{ $group?: boolean }>`
  display: grid;
  grid-template-columns: repeat(17, 1fr);
  grid-auto-rows: 9px;
  gap: 1px;
  margin-top: ${p => (p.$group ? 1 : 0)}px;
`;

const Swatch = styled.button<{ $bg: string }>`
  background: ${p => p.$bg};
  overflow: hidden;
`;

const SwatchScroll = styled.div`
  width: 8px;
  display: flex;
  flex-direction: column;
  justify-content: space-between;
  align-items: center;
  padding: 3px 0;
  background: #3a3a3a;
`;

const rows = [
  ['none', 'reg', '#fff', '#231815', '#e60012', '#fff100', '#009944', '#00a0e9', '#1d2088', '#e4007f', '#c7152b', '#e5392b', '#ea5519', '#f39800', '#f5b02e', '#f2e600', '#dfdc10'],
  ['#8fc31f', '#22ac38', '#009a3e', '#006934', '#14ae67', '#00a99d', '#2ea7e0', '#0068b7', '#14308f', '#1b1464', '#601986', '#920783', '#a40060', '#d7005f', '#e5007f', '#c9b995', '#998675'],
  ['#736357', '#534741', '#c69c6d', '#a67c52', '#8c6239', '#754c24', '#603813', '#42210b', 'linear-gradient(90deg,#fff,#333)', 'linear-gradient(90deg,#fff100,#ea6000)', 'linear-gradient(90deg,#2a7fd0,#e8f4ff)', 'radial-gradient(circle,#fff 45%,#111 55%)', 'radial-gradient(circle,#fff 20%,#6fb52c 35%,#b7dc7a 70%)', 'repeating-linear-gradient(45deg,#c69078 0 2px,#e9dcc8 2px 3px)', 'transparent', 'linear-gradient(90deg,transparent 20%,#1f3a93 20% 65%,transparent 65%)'],
  ['folder', '#231815', '#3a3a3a', '#585858', '#707070', '#868686', '#9b9b9b', '#b4b4b4', '#c9c9c9', '#dadada', '#ebebeb', '#f7f7f7'],
  ['folder', '#e60012', '#ed6c00', '#fff100', '#009a3e', '#00368f', '#7b2d8b'],
];

const special: Record<string, string> = { none: '#fff', reg: 'repeating-radial-gradient(circle,#222 0 1px,#eee 1px 2px)', folder: '#666' };

const ViewToggle = styled.div`
  display: flex;
  border: 1px solid #303030;
  & > button { width: 17px; height: 14px; background: #505050; }
  & > button + button { background: #2b2b2b; }
`;

const SwatchesPanel = () => (
  <Panel>
    <TabBar tabs={['スウォッチ', 'カラー', 'カラーガイド']} on={0} />
    <Body $pt={1} $pb={0}>
      <Row $h={27}>
        <svg width="21" height="22" viewBox="0 0 21 22"><rect x="8" y="8" width="12" height="12" fill="#bbb" /><rect x="9" y="9" width="10" height="10" /><rect x="12" y="12" width="5" height="5" fill="#404040" stroke="#aaa" strokeWidth=".7" /><rect width="13" height="13" y="1" fill="#fff" /><path d="M0 14L13 1" stroke="#d8242a" strokeWidth="1.400" /></svg>
        <Push />
        <ViewToggle>
          <button aria-label="リスト"><Ico w={9} h={8} d="M0 .5h9M0 2.500h9M0 4.500h9M0 6.500h9" line /></button>
          <button aria-label="サムネール"><Ico w={11} h={9} d="M0 0h3v2H0zM4 0h3v2H4zM8 0h3v2H8zM0 3h3v2H0zM4 3h3v2H4zM8 3h3v2H8zM0 6h3v2H0zM4 6h3v2H4zM8 6h3v2H8z" c="#ddd" /></button>
        </ViewToggle>
      </Row>
      <SwatchBox>
        <SwatchList>
          {rows.map((r, y) => (
            <SwatchRow key={y} $group={y > 2}>
              {r.map((c, i) => (
                <Swatch key={i} aria-label="スウォッチ" $bg={special[c] ?? c}>
                  {c === 'none' && <NoneSwatch s={10} />}
                  {c === 'folder' && <FaFolder size={8} color="#b9b9b9" />}
                </Swatch>
              ))}
            </SwatchRow>
          ))}
        </SwatchList>
        <SwatchScroll><Ico w={5} h={3} d="M0 3h5L2.500 0z" c="#888" /><Ico w={5} h={3} d="M0 0h5L2.500 3z" c="#888" /></SwatchScroll>
      </SwatchBox>
      <Footer $gap={11}>
        <Ico w={12} h={8} d="M1 0v7M3.500 0v7M5 1l3 6M10 7h1" line />
        <Ico w={8} h={8} d="M7 1L2 4l5 3M1 4h5" line />
        <Ico w={11} h={8} d="M3 7a2.500 2.500 0 0 1 0-4 3 3 0 0 1 5.500 0 2 2 0 0 1 0 4zM4 5h3" line />
        <Push />
        <Ico w={11} h={8} d="M0 0h3v3H0zM4 0h4v3H4zM0 4h3v3H0zM4 4h3v3H4zM9 6h2v2H9z" />
        <Ico w={9} h={7} d="M0 1.500h9M0 3.500h9M0 5.500h9" line c="#666" />
        <FaFolder size={9} />
        <NewMark o={0.4} />
        <Dim><Trash2 size={9} /></Dim>
        <span />
      </Footer>
    </Body>
  </Panel>
);

/* ---------- appearance ---------- */

const AppearanceBox = styled.div`
  height: 51px;
  display: flex;
  border: 1px solid #303030;
  overflow: hidden;
`;

const AppearanceList = styled.div`
  flex: 1;
`;

const Attr = styled.div<{ $h: number; $hi?: boolean }>`
  height: ${p => p.$h}px;
  display: grid;
  grid-template-columns: 19px 13px 49px 22px 1fr;
  align-items: center;
  padding-left: 2px;
  border-bottom: 1px solid #353535;
  background: ${p => (p.$hi ? '#4c4c4c' : '#404040')};
  white-space: nowrap;
`;

const White = styled.span`
  width: 13px;
  height: 13px;
  background: #fff;
`;

const Item = styled.strong<{ $big?: boolean }>`
  font-size: ${p => (p.$big ? 10 : 8)}px;
  font-weight: ${p => (p.$big ? 400 : 700)};
  color: #ececec;
`;

const AttrLink = styled.a<{ $end?: boolean }>`
  color: #e28b35;
  font-weight: 700;
  text-align: ${p => (p.$end ? 'right' : 'left')};
  text-decoration: ${p => (p.$end ? 'none' : 'underline')};
`;

const AttrScroll = styled(SwatchScroll)`
  justify-content: flex-start;
  gap: 3px;
  & > svg:last-child { margin-top: auto; }
`;

const AppearancePanel = () => (
  <Panel>
    <TabBar tabs={['アピアランス', 'CSS プロパティ']} on={0} />
    <Body $pb={0}>
      <AppearanceBox>
        <AppearanceList>
          <Attr $h={17}><White /><span /><Item>パス</Item></Attr>
          <Attr $h={19}>
            <Eye size={9} /><Caret c="#ddd" /><AttrLink href="#line">線 :</AttrLink>
            <svg width="12" height="12" viewBox="0 0 12 12"><rect x=".5" y=".5" width="11" height="11" fill="#333" stroke="#bbb" /><rect x="3" y="3" width="6" height="6" stroke="#ccc" strokeWidth=".8" /></svg>
            <Item as="span" $big>0.106 mm</Item>
          </Attr>
          <Attr $h={16} $hi><Dim><Eye size={9} /></Dim><span /><AttrLink $end href="#opacity">不透明度 :</AttrLink><span /><Item as="span">初期設定</Item></Attr>
        </AppearanceList>
        <AttrScroll><Ico w={5} h={3} d="M0 3h5L2.500 0z" /><Thumb $w={8} $h={12} /><Ico w={5} h={3} d="M0 0h5L2.500 3z" /></AttrScroll>
      </AppearanceBox>
      <Footer $gap={10}>
        <Ico w={9} h={9} d="M1.500 1.500h6v6h-6z" line c="#ddd" />
        <Ico w={9} h={9} d="M0 0h9v9H0zM1 1v7h7V1zM3 3h4v4H3z" c="#aaa" />
        <em>fx.</em>
        <Push />
        <Ban size={9} />
        <NewMark o={0.4} />
        <Dim><Trash2 size={9} /></Dim>
        <span />
      </Footer>
    </Body>
  </Panel>
);

const BoardRow = styled.div`
  height: 14px;
  display: grid;
  grid-template-columns: 21px 1fr 29px;
  align-items: center;
  background: #566273;
  color: #e8e8e8;
  font-weight: 500;
  & > * { padding-left: 5px; height: 12px; line-height: 12px; border-right: 1px solid #414b58; }
`;

const ArtboardsPanel = () => (
  <Panel $grow>
    <TabBar tabs={['レイヤー', 'アートボード']} on={1} />
    <Body $pb={0}>
      <Well>
        <BoardRow>
          <span>1</span><span>アートボード 1</span>
          <span><Ico w={18} h={12} d="M6.500 1v10M11.500 1v10M4 2.500h10M4 8.500h10" line c="#a8b0ba" /></span>
        </BoardRow>
      </Well>
      <Footer $gap={10}>
        <Label as="span">1 アートボード</Label>
        <Push />
        <Ico w={7} h={7} d="M3.500 0L7 3.500H5V7H2V3.500H0z" c="#686868" />
        <Ico w={7} h={7} d="M3.500 7L7 3.500H5V0H2v3.500H0z" c="#686868" />
        <NewMark />
        <Dim><Trash2 size={9} /></Dim>
        <span />
      </Footer>
    </Body>
    <GripBar />
  </Panel>
);

const Chevrons = () => <Ico w={6} h={5} d="M0 0l3 2.500L0 5zM3 0l3 2.500L3 5z" c="#aaa" />;

export default function App() {
  return (
    <Page>
      <GlobalStyle />
      <MenuBar>
        <FaApple size={11} />
        <BarSet $ml={7}>
          <MenuTitle $bold>Illustrator CC</MenuTitle>
          <BarSet $ml={5}>
            {['ファイル', '編集', 'オブジェクト', '書式', '選択', '効果'].map(t => <MenuTitle key={t}>{t}</MenuTitle>)}
            <MenuAnchor>
              <MenuTitle $open>表示</MenuTitle>
              <DropMenu>
                {viewMenu.map((g, i) => (
                  <React.Fragment key={i}>
                    {i > 0 && <MenuRule />}
                    <li><MenuGroup>{g.map(e => <MenuLine key={e.t} e={e} />)}</MenuGroup></li>
                  </React.Fragment>
                ))}
              </DropMenu>
            </MenuAnchor>
            <MenuTitle>ウィンドウ</MenuTitle>
            <MenuTitle>ヘルプ</MenuTitle>
          </BarSet>
        </BarSet>
        <StatusItems>
          <svg width="13" height="11" viewBox="0 0 13 11"><ellipse cx="6.500" cy="5.500" rx="6.500" ry="5" fill="#1d2426" /><path d="M5.500 7.500a2 2 0 1 1 .5-3l2 2a2 2 0 1 0 0-3" fill="none" stroke="#d6efee" /></svg>
          <FaEvernote size={10} />
          <svg width="13" height="12" viewBox="0 0 13 12"><ellipse cx="6.500" cy="5.500" rx="6.500" ry="5.300" fill="#15191a" /><path d="M5 10l1.500 2L9 10z" fill="#15191a" /><path d="M3 4v3h1.500M5.500 4v3M6.700 7V4l1.500 3V4M11 4.200H9.500v2.600H11M9.500 5.500h1.300" fill="none" stroke="#d6efee" strokeWidth=".7" /></svg>
          <svg width="13" height="10" viewBox="0 0 13 10"><rect width="13" height="10" rx="1.500" fill="#2a4144" /><path d="M2.500 2v6M4.500 2v6M6.500 2v6M8.500 2v6M10.500 2v6" stroke="#bfe0e0" /></svg>
          <Wifi size={13} />
          <svg width="12" height="12" viewBox="0 0 12 12" fill="none" stroke="#a9bfc1"><path d="M2 3a5 5 0 1 1-1 4M6 3v3l2 2M1 1v3h3" /></svg>
          <Bluetooth size={11} />
          <Volume2 size={11} fill="#1c2224" />
          <BarSet $gap={3}>81%<svg width="18" height="10" viewBox="0 0 18 10" fill="none" stroke="#1c2224"><path d="M5 1.500H1.500v7H5M12 1.500h3v7h-3M17 4v2M9.500 1L6.500 5h4L7.500 9" /></svg></BarSet>
          <InputMode>A</InputMode>
          <Clock><span>11月30日(水)</span><span>21:37:18</span></Clock>
          <Search size={11} />
          <BarSet $ml={4}><Ico w={13} h={9} d="M0 1.500h2M0 4.500h2M0 7.500h2M4 1.500h9M4 4.500h9M4 7.500h9" line c="#1c2224" /></BarSet>
        </StatusItems>
      </MenuBar>
      <TopBar />
      <Workspace>
        <DocWindow>
          <TitleBar>
            <Light $c="#ee5b55" aria-label="閉じる">•</Light>
            <Light $c="#f6be3b" aria-label="しまう" />
            <Light $c="#35c648" aria-label="拡大" />
            <DocName>
              <svg width="9" height="10" viewBox="0 0 9 10"><path d="M1 0h8v10H1z" fill="#f4f4f4" /><path d="M0 1h8v4H0z" fill="#d8574f" /></svg>
              イラレ　トンボ.pdf* @ 115.41% (CMYK/プレビュー)
            </DocName>
          </TitleBar>
          <Stage>
            <Canvas>
              <Artboard><Artwork /></Artboard>
              <Palette>
                <PaletteHead>
                  <Ico w={5} h={5} d="M1 1l3 3M4 1L1 4" line c="#999" />
                  <Ico w={6} h={5} d="M3 0L0 2.500 3 5zM6 0L3 2.500 6 5z" c="#aaa" />
                </PaletteHead>
                <PaletteGrip />
                <Tools>
                  {toolset.map(t => <Tool key={t.name} aria-label={t.name} $on={t.on} $more={t.more}>{t.icon}</Tool>)}
                </Tools>
                <PaletteStack>
                  <FillStroke />
                  <Chips>
                    <button aria-label="カラー"><svg width="9" height="9"><rect width="9" height="9" fill="#cf0a3c" /></svg></button>
                    <button aria-label="グラデーション"><svg width="9" height="9"><rect width="9" height="9" fill="url(#gr)" /></svg></button>
                    <button aria-label="なし"><NoneSwatch s={9} /></button>
                  </Chips>
                  <Chips>
                    {[0, 1, 2].map(n => (
                      <button key={n} aria-label="描画方法"><svg width="10" height="9" viewBox="0 0 10 9" opacity={n === 2 ? 0.3 : 1}><circle cx="4" cy="4" r="3" fill="#888" stroke="#bbb" /><rect x="4.500" y="4.500" width="4" height="4" fill="#bbb" /></svg></button>
                    ))}
                  </Chips>
                  <svg width="16" height="13" viewBox="0 0 16 13" fill="#777" stroke="#bbb"><rect x="5.500" y="1.500" width="10" height="7" /><rect x=".5" y="5.500" width="9" height="6" /></svg>
                </PaletteStack>
              </Palette>
            </Canvas>
            <VScroll>
              <Ico w={6} h={4} d="M0 4h6L3 0z" c="#ddd" />
              <Thumb $w={11} $h={11} />
              <Caret c="#ddd" />
            </VScroll>
          </Stage>
          <StatusBar>
            <BarSet $ml={4} $gap={4}>
              <StatusField $w={37} aria-label="ズーム" defaultValue="115.41%" /><Caret />
              <BarSet $ml={6} $gap={8}><Ico w={5} h={6} d="M0 0h1v6H0zM5 0v6L1 3z" c="#777" /><Ico w={4} h={6} d="M4 0v6L0 3z" c="#777" /></BarSet>
            </BarSet>
            <BarSet $ml={7} $gap={3}><StatusField $w={29} aria-label="アートボード番号" defaultValue="1" /><Caret /></BarSet>
            <BarSet $ml={9} $gap={8}><Ico w={4} h={6} d="M0 0v6l4-3z" c="#777" /><Ico w={5} h={6} d="M0 0v6l4-3zM4 0h1v6H4z" c="#777" /></BarSet>
            <StatusText>選択</StatusText>
            <Ico w={4} h={6} d="M0 0v6l4-3z" c="#ddd" />
            <BarSet $ml={5} />
            <HTrack>
              <Ico w={4} h={6} d="M4 0v6L0 3z" c="#ddd" /><Thumb $w={11} $h={10} /><Ico w={4} h={6} d="M0 0v6l4-3z" c="#ddd" />
            </HTrack>
            <BarSet $ml={14} />
          </StatusBar>
        </DocWindow>
        <Dock>
          <Column>
            <DockHead><Chevrons /></DockHead>
            <StrokePanel />
            <ParagraphPanel />
            <VariablesPanel />
            <Tabs><TabButton $on>アクション</TabButton><Push /><PanelMenu /></Tabs>
            <GripBar />
          </Column>
          <Column>
            <DockHead><Chevrons /></DockHead>
            <TransformPanel />
            <SwatchesPanel />
            <Panel><TabBar tabs={['シンボル', 'ブラシ', 'グラフィックスタイル']} on={2} /></Panel>
            <AppearancePanel />
            <ArtboardsPanel />
          </Column>
        </Dock>
      </Workspace>
      <Desktop />
    </Page>
  );
}
